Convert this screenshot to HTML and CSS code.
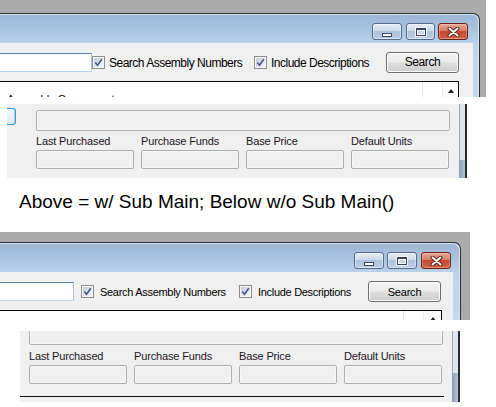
FILE: index.html
```html
<!DOCTYPE html>
<html>
<head>
<meta charset="utf-8">
<link rel="stylesheet" href="styles.css">
</head>
<body>
<div class="page">

  <section class="shot shot-a">
    <div class="win">
      <div class="titlebar">
        <span class="cap cap-min"><i class="g-min"></i></span>
        <span class="cap cap-max"><i class="g-max"></i></span>
        <span class="cap cap-close"><svg width="13" height="10" viewBox="0 0 13 10"><path d="M2.5 1.5 L10.5 8.5 M10.5 1.5 L2.5 8.5" stroke="#5c1f14" stroke-width="4" stroke-linecap="round"/><path d="M2.5 1.5 L10.5 8.5 M10.5 1.5 L2.5 8.5" stroke="#ffffff" stroke-width="2" stroke-linecap="round"/></svg></span>
      </div>
      <div class="client">
        <div class="toolbar">
          <div class="textbox"></div>
          <div class="opt opt1">
            <span class="chk"><span class="chk-in"><svg width="9" height="9" viewBox="0 0 9 9"><path d="M1.3 4.6 L3.5 7.2 L7.8 1.2" fill="none" stroke="#44578a" stroke-width="1.6"/></svg></span></span>
            <span class="opt-text">Search Assembly Numbers</span>
          </div>
          <div class="opt opt2">
            <span class="chk"><span class="chk-in"><svg width="9" height="9" viewBox="0 0 9 9"><path d="M1.3 4.6 L3.5 7.2 L7.8 1.2" fill="none" stroke="#44578a" stroke-width="1.6"/></svg></span></span>
            <span class="opt-text">Include Descriptions</span>
          </div>
          <div class="btn">Search</div>
        </div>
        <div class="list">
          <div class="list-col list-main">Assembly Component</div>
          <div class="list-col list-side">.</div>
          <div class="list-scroll"><i class="arrow-up"></i></div>
        </div>
      </div>
    </div>
  </section>

  <section class="panel panel-a">
    <div class="pane">
      <div class="pane-row">
        <div class="frag"></div>
        <div class="fields">
          <div class="field field-wide"></div>
          <div class="grid labels">
            <span class="lbl">Last Purchased</span>
            <span class="lbl">Purchase Funds</span>
            <span class="lbl">Base Price</span>
            <span class="lbl">Default Units</span>
          </div>
          <div class="grid">
            <div class="field"></div>
            <div class="field"></div>
            <div class="field"></div>
            <div class="field"></div>
          </div>
        </div>
      </div>
    </div>
    <div class="sbar"><div class="sbar-track"></div><div class="sbar-thumb"></div></div>
  </section>

  <p class="caption">Above = w/ Sub Main; Below w/o Sub Main()</p>

  <section class="shot shot-b">
    <div class="win">
      <div class="titlebar">
        <span class="cap cap-min"><i class="g-min"></i></span>
        <span class="cap cap-max"><i class="g-max"></i></span>
        <span class="cap cap-close"><svg width="13" height="10" viewBox="0 0 13 10"><path d="M2.5 1.5 L10.5 8.5 M10.5 1.5 L2.5 8.5" stroke="#5c1f14" stroke-width="4" stroke-linecap="round"/><path d="M2.5 1.5 L10.5 8.5 M10.5 1.5 L2.5 8.5" stroke="#ffffff" stroke-width="2" stroke-linecap="round"/></svg></span>
      </div>
      <div class="client">
        <div class="toolbar">
          <div class="textbox"></div>
          <div class="opt opt1">
            <span class="chk"><span class="chk-in"><svg width="9" height="9" viewBox="0 0 9 9"><path d="M1.3 4.6 L3.5 7.2 L7.8 1.2" fill="none" stroke="#44578a" stroke-width="1.6"/></svg></span></span>
            <span class="opt-text">Search Assembly Numbers</span>
          </div>
          <div class="opt opt2">
            <span class="chk"><span class="chk-in"><svg width="9" height="9" viewBox="0 0 9 9"><path d="M1.3 4.6 L3.5 7.2 L7.8 1.2" fill="none" stroke="#44578a" stroke-width="1.6"/></svg></span></span>
            <span class="opt-text">Include Descriptions</span>
          </div>
          <div class="btn">Search</div>
        </div>
        <div class="list">
          <div class="list-col list-main"></div>
          <div class="list-col list-side"></div>
          <div class="list-scroll"><i class="arrow-up"></i></div>
        </div>
      </div>
    </div>
  </section>

  <section class="panel panel-b">
    <div class="pane">
      <div class="pane-row">
        <div class="fields">
          <div class="field field-wide"></div>
          <div class="grid labels">
            <span class="lbl">Last Purchased</span>
            <span class="lbl">Purchase Funds</span>
            <span class="lbl">Base Price</span>
            <span class="lbl">Default Units</span>
          </div>
          <div class="grid">
            <div class="field"></div>
            <div class="field"></div>
            <div class="field"></div>
            <div class="field"></div>
          </div>
        </div>
      </div>
      <div class="rule"></div>
    </div>
    <div class="sbar"><div class="sbar-track"></div><div class="sbar-thumb"></div></div>
  </section>

</div>
</body>
</html>
```

FILE: styles.css
```css
* { box-sizing: border-box; }

html, body {
  margin: 0;
  padding: 0;
  background: #ffffff;
}

body {
  font-family: "Liberation Sans", Arial, sans-serif;
  color: #000;
}

.page {
  width: 496px;
  height: 407px;
  overflow: hidden;
  display: flex;
  flex-direction: column;
  align-items: flex-start;
}

/* ---------- window screenshots ---------- */
.shot {
  background: #ababab;
  overflow: hidden;
  flex: none;
}

.shot-a {
  width: 486px;
  height: 97px;
  padding-top: 13px;
}

.shot-b {
  width: 470px;
  height: 88px;
  padding-top: 10px;
  margin-top: 19px;
}

.win {
  border-top: 1px solid #2e2e2e;
  border-right: 1px solid #2e2e2e;
  border-top-right-radius: 7px;
  background: linear-gradient(#9bb5d3 0px, #a9c2de 14px, #bad1ea 29px, #c0d6ee 40px, #c2d8ef 100%);
  box-shadow: inset -1px 1px 0 #d8e6f4;
  height: 100%;
  display: flex;
  flex-direction: column;
}

.shot-a .win { width: 480px; }
.shot-b .win { width: 461px; }

.titlebar {
  height: 29px;
  flex: none;
  display: flex;
  justify-content: flex-end;
  align-items: flex-start;
  padding-top: 9px;
}

.shot-a .titlebar { padding-right: 11px; }
.shot-b .titlebar { padding-right: 9px; }

.cap {
  width: 30px;
  height: 17px;
  border: 1px solid #566b89;
  border-radius: 3px;
  display: flex;
  align-items: center;
  justify-content: center;
  background: linear-gradient(#e4edf7 0%, #ccdaea 45%, #aec3dc 50%, #b9cee6 100%);
  box-shadow: inset 0 0 0 1px rgba(255, 255, 255, 0.45);
}

.cap-max { margin-left: 4px; }
.cap-close { margin-left: 3px; }
.shot-a .cap-max { width: 29px; }
.shot-b .cap-max { margin-left: 3px; }
.shot-b .cap-close { margin-left: 4px; }

.cap-close {
  border-color: #6b2518;
  background: linear-gradient(#eaa999 0%, #d67b66 45%, #c3492f 50%, #cf6347 100%);
  box-shadow: inset 0 0 0 1px rgba(255, 220, 210, 0.35);
}

.g-min {
  display: block;
  width: 10px;
  height: 4px;
  margin-top: 6px;
  background: #ffffff;
  border: 1px solid #3a4a63;
}

.g-max {
  display: block;
  width: 10px;
  height: 8px;
  margin-top: 1px;
  border: 1px solid #34445d;
  border-top-width: 2px;
  background: #c9d7e8;
  box-shadow: 0 0 0 1px rgba(255, 255, 255, 0.8), inset 0 0 0 1px #ffffff;
}

.client {
  flex: 1;
  background: #f0f0f0;
  padding-top: 10px;
  display: flex;
  flex-direction: column;
}

.shot-a .client { width: 473px; }
.shot-b .client { width: 453px; }

.toolbar {
  height: 19px;
  flex: none;
  display: flex;
  align-items: center;
}

.textbox {
  height: 19px;
  background: #ffffff;
  border-top: 1px solid #5a80a8;
  border-right: 1px solid #a7c8e6;
  border-bottom: 1px solid #b5d3ee;
  flex: none;
}

.shot-a .textbox { width: 92px; }
.shot-b .textbox { width: 74px; margin-right: 7px; }

.opt {
  display: flex;
  align-items: center;
  flex: none;
  white-space: nowrap;
}

.shot-a .opt1 { width: 162px; }
.shot-a .opt2 { width: 132px; }
.shot-b .opt1 { width: 158px; }
.shot-b .opt2 { width: 129px; }

.chk {
  width: 13px;
  height: 13px;
  border: 1px solid #8d8e8f;
  background: #f6f6f6;
  padding: 1px;
  flex: none;
  display: block;
}

.chk-in {
  display: flex;
  align-items: center;
  justify-content: center;
  width: 9px;
  height: 9px;
  background: linear-gradient(135deg, #c8ccd3 0%, #e2e4e8 60%, #f4f4f4 100%);
}

.opt-text {
  line-height: 14px;
}

.shot-a .opt-text {
  font-size: 12px;
  letter-spacing: -0.5px;
  margin-left: 4px;
}

.shot-b .opt-text {
  font-size: 11px;
  letter-spacing: -0.3px;
  margin-left: 6px;
}

.btn {
  width: 73px;
  height: 21px;
  border: 1px solid #707070;
  border-radius: 3px;
  background: linear-gradient(#f3f3f3 0%, #ebebeb 48%, #dddddd 52%, #cfcfcf 100%);
  box-shadow: inset 0 0 0 1px #fcfcfc;
  display: flex;
  align-items: center;
  justify-content: center;
  flex: none;
  line-height: 14px;
  color: #000;
}

.shot-a .btn { font-size: 12px; letter-spacing: -0.4px; margin-top: -1px; }
.shot-b .btn { font-size: 11px; letter-spacing: -0.2px; }

.list {
  margin-top: 9px;
  flex: 1;
  border-top: 1px solid #0a0a0a;
  border-right: 1px solid #0a0a0a;
  background: #ffffff;
  display: flex;
  overflow: hidden;
}

.shot-a .list { width: 459px; }
.shot-b .list { width: 442px; }

.list-col {
  font-size: 11px;
  line-height: 13px;
  white-space: nowrap;
  overflow: hidden;
  padding-top: 11px;
}

.list-main { padding-left: 7px; }

.shot-a .list-main { width: 423px; border-right: 1px solid #e3e3e3; }
.shot-a .list-side { width: 19px; padding-left: 6px; }
.shot-b .list-main { width: 404px; border-right: 1px solid #e3e3e3; }
.shot-b .list-side { width: 19px; }

.list-scroll {
  flex: 1;
  border-left: 1px solid #ececec;
  background: #fbfbfb;
  display: flex;
  justify-content: center;
  align-items: flex-start;
}

.shot-a .list-scroll { padding-top: 7px; }
.shot-b .list-scroll { padding-top: 6px; }

.arrow-up {
  display: block;
  width: 0;
  height: 0;
  border-left: 3.5px solid transparent;
  border-right: 3.5px solid transparent;
  border-bottom: 4px solid #1a1a1a;
}

/* ---------- lower panels ---------- */
.panel {
  display: flex;
  flex: none;
  overflow: hidden;
}

.panel-a {
  margin-left: 7px;
  margin-top: 7px;
  width: 460px;
  height: 74px;
}

.panel-b {
  margin-left: 20px;
  margin-top: 11px;
  width: 440px;
  height: 71px;
}

.pane {
  background: #f0f0f0;
  display: flex;
  flex-direction: column;
}

.panel-a .pane { width: 452px; }
.panel-b .pane { width: 432px; }

.pane-row {
  display: flex;
  align-items: flex-start;
}

.frag {
  width: 9px;
  height: 17px;
  margin-top: 4px;
  border: 1px solid #3a93d8;
  border-left: none;
  border-radius: 0 3px 3px 0;
  background: linear-gradient(#f2f7fb, #dfe9f2);
  box-shadow: inset -1px 0 0 #a9d6f5;
  flex: none;
}

.fields {
  width: 414px;
  flex: none;
}

.panel-a .fields { margin-left: 20px; padding-top: 6px; }
.panel-b .fields { margin-left: 9px; }

.field {
  height: 19px;
  border: 1px solid #aeaeae;
  border-radius: 2px;
  background: #f0f0f0;
  box-shadow: inset 0 0 0 1px #f7f7f7;
}

.field-wide {
  height: 21px;
}

.panel-b .field-wide { margin-top: -7px; }

.grid {
  display: grid;
  grid-template-columns: 98px 98px 98px 98px;
  column-gap: 7px;
}

.labels {
  margin-top: 4px;
  margin-bottom: 2px;
}

.panel-b .labels { margin-top: 5px; }

.lbl {
  font-size: 11px;
  line-height: 13px;
  letter-spacing: -0.15px;
  color: #1c141e;
  white-space: nowrap;
}

.rule {
  width: 424px;
  height: 1px;
  margin-top: 12px;
  background: #0f0f0f;
}

.sbar {
  width: 8px;
  display: flex;
  flex-direction: column;
  border-right: 2px solid #2a2a2a;
  background: #dfe5ee;
  box-shadow: inset 1px 0 0 #9aa6b5;
}

.sbar-track { flex: none; }
.panel-a .sbar-track { height: 56px; }
.panel-b .sbar-track { height: 42px; }

.sbar-thumb {
  flex: 1;
  background: linear-gradient(90deg, #8c9db3, #b3c3d6);
}

/* ---------- caption ---------- */
.caption {
  margin: 13px 0 0 19px;
  font-size: 19px;
  line-height: 22px;
  color: #000;
  white-space: nowrap;
  flex: none;
}
```
